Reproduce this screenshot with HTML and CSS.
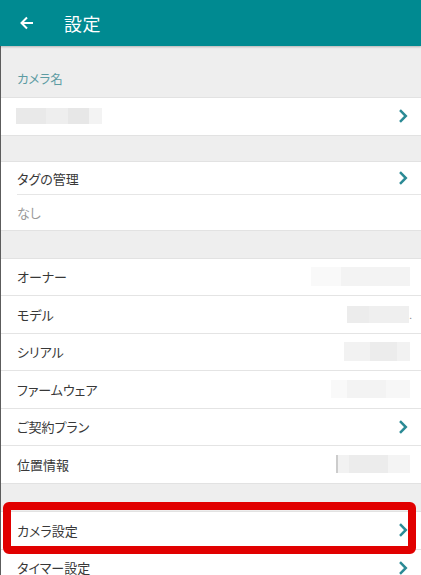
FILE: index.html
```html
<!DOCTYPE html>
<html lang="ja">
<head>
<meta charset="utf-8">
<link rel="stylesheet" href="styles.css">
</head>
<body>
<header class="appbar">
  <svg class="back" width="14" height="14" viewBox="0 0 14 14"><path d="M13 7H2M7 1.5L1.5 7 7 12.5" fill="none" stroke="#fff" stroke-width="2"/></svg>
  <span class="title">設定</span>
</header>
<main class="content">
  <div class="caption">カメラ名</div>
  <section class="group">
    <div class="row">
      <span class="blur blur-name"></span>
      <svg class="chev" width="10" height="14" viewBox="0 0 10 14"><path d="M2 1.2L7.8 7 2 12.8" fill="none" stroke="#2b8a95" stroke-width="2.5"/></svg>
    </div>
  </section>
  <div class="gap"></div>
  <section class="group">
    <div class="row row-inset row-tag">
      <span class="label">タグの管理</span>
      <svg class="chev" width="10" height="14" viewBox="0 0 10 14"><path d="M2 1.2L7.8 7 2 12.8" fill="none" stroke="#2b8a95" stroke-width="2.5"/></svg>
    </div>
    <div class="row row-sub"><span class="label muted">なし</span></div>
  </section>
  <div class="gap gap-mid"></div>
  <section class="group">
    <div class="row line"><span class="label">オーナー</span><span class="blur blur-owner"></span></div>
    <div class="row line"><span class="label">モデル</span><span class="blur blur-model"></span><span class="dot">.</span></div>
    <div class="row line"><span class="label">シリアル</span><span class="blur blur-serial"></span></div>
    <div class="row line"><span class="label">ファームウェア</span><span class="blur blur-fw"></span></div>
    <div class="row line"><span class="label">ご契約プラン</span>
      <svg class="chev" width="10" height="14" viewBox="0 0 10 14"><path d="M2 1.2L7.8 7 2 12.8" fill="none" stroke="#2b8a95" stroke-width="2.5"/></svg>
    </div>
    <div class="row"><span class="label">位置情報</span><span class="blur blur-loc"></span></div>
  </section>
  <div class="gap gap-last"></div>
  <section class="group">
    <div class="row line highlight"><span class="label">カメラ設定</span>
      <svg class="chev" width="10" height="14" viewBox="0 0 10 14"><path d="M2 1.2L7.8 7 2 12.8" fill="none" stroke="#2b8a95" stroke-width="2.5"/></svg>
      <span class="redbox"></span>
    </div>
    <div class="row"><span class="label">タイマー設定</span>
      <svg class="chev" width="10" height="14" viewBox="0 0 10 14"><path d="M2 1.2L7.8 7 2 12.8" fill="none" stroke="#2b8a95" stroke-width="2.5"/></svg>
    </div>
  </section>
</main>
</body>
</html>
```
FILE: styles.css
```css
html, body {
  margin: 0;
  padding: 0;
  height: 100%;
  overflow: hidden;
}
body {
  font-family: "Noto Sans CJK JP", "Noto Sans", sans-serif;
  font-size: 13px;
  color: #383838;
  background: #eeeeee;
  font-feature-settings: "palt";
}
.appbar {
  height: 46px;
  background: #008a91;
  display: flex;
  align-items: center;
  padding-left: 20px;
  box-shadow: 0 1px 2px rgba(0,0,0,0.25);
  position: relative;
  z-index: 1;
}
.back { flex: none; }
.title {
  color: #fff;
  font-size: 18px;
  margin-left: 30px;
  letter-spacing: 0.5px;
}
.content {
  border-left: 1px solid #5c5c5c;
  min-height: 600px;
  background: #eeeeee;
}
.caption {
  height: 51px;
  box-sizing: border-box;
  padding: 26px 0 0 16px;
  color: #5d9ca3;
  font-size: 12.5px;
  line-height: 14px;
}
.group {
  background: #fff;
  border-top: 1px solid #e2e2e2;
  border-bottom: 1px solid #e2e2e2;
}
.gap { height: 25px; }
.gap-mid { height: 27px; }
.gap-last { height: 27px; }
.row {
  height: 36.5px;
  display: flex;
  align-items: center;
  padding: 0 13px 0 16px;
  position: relative;
}
.row.line { border-bottom: 1px solid #e4e4e4; }
.row-tag { height: 33px; }
.row-inset::after {
  content: "";
  position: absolute;
  left: 16px;
  right: 0;
  bottom: 0;
  border-bottom: 1px solid #e6e6e6;
}
.row-sub { height: 35px; }
.label { flex: none; }
.muted { color: #9a9a9a; }
.chev { margin-left: auto; flex: none; }
.blur {
  display: block;
  flex: none;
  height: 17px;
}
.blur-name {
  width: 86px;
  height: 16px;
  margin-left: -1px;
  background: linear-gradient(90deg, #e9e9e9 0 35%, #eeeeee 35% 60%, #e7e7e7 60% 85%, #f3f3f3 85%);
}
.blur-owner { margin-left: auto; width: 99px; height: 19px; margin-right: -2px; background: linear-gradient(90deg, #f9f9f9 0 30%, #f3f3f3 30%); }
.blur-model { margin-left: auto; width: 62px; height: 17px; background: linear-gradient(90deg, #ececec 0 35%, #efefef 35%); }
.dot { color: #888; font-size: 10px; margin-right: -4px; align-self: center; }
.blur-serial { margin-left: auto; width: 66px; height: 19px; margin-right: -2px; background: linear-gradient(90deg, #f2f2f2 0 40%, #ececec 40% 80%, #f2f2f2 80%); }
.blur-fw { margin-left: auto; width: 79px; height: 18px; margin-right: -2px; background: linear-gradient(90deg, #f9f9f9 0 20%, #f3f3f3 20% 70%, #f7f7f7 70%); }
.blur-loc { margin-left: auto; width: 72px; height: 18px; margin-right: -2px; border-left: 2px solid #ccc; background: linear-gradient(90deg, #f2f2f2 0 15%, #ececec 15% 70%, #f4f4f4 70%); }
.highlight { height: 37px; }
.redbox {
  position: absolute;
  left: 2px;
  right: 5px;
  top: -10px;
  bottom: -5px;
  border: 8px solid #e10000;
  border-radius: 6px;
  pointer-events: none;
}
```
